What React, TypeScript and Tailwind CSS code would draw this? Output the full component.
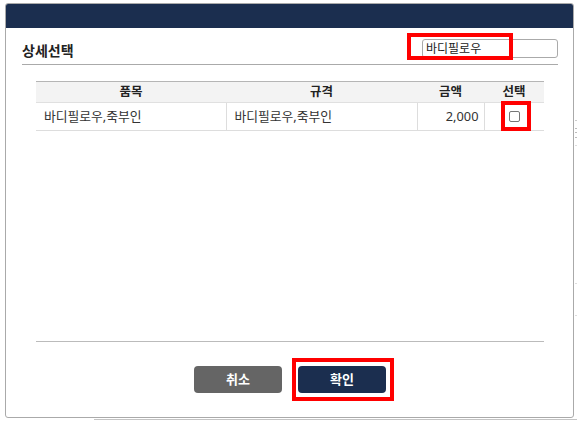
const font = { fontFamily: '"Noto Sans", "Noto Sans CJK KR", sans-serif' };

const rows = [{ name: "바디필로우,죽부인", spec: "바디필로우,죽부인", price: "2,000" }];

export default function App() {
	return (
		<div className="relative h-[421px] w-[577px] overflow-hidden bg-white text-[#222]" style={font}>
			{/* page behind the modal */}
			<div className="absolute inset-0 flex flex-col">
				<div className="ml-[575px] flex flex-col pt-[120px]">
					<div className="h-px bg-[#ccc]" />
					<div className="mt-[7px] h-px bg-[#bbb]" />
					<div className="mt-[3px] h-px bg-[#bbb]" />
					<div className="mt-[4px] h-px bg-[#bbb]" />
					<div className="mt-[7px] h-px bg-[#ddd]" />
					<div className="mt-[137px] h-px bg-[#ddd]" />
					<div className="mt-[31px] h-px bg-[#ddd]" />
				</div>
				<div className="mt-auto mb-[1px] ml-[94px] h-px bg-[#c4c4c4]" />
			</div>

			{/* modal */}
			<div className="absolute top-[3px] left-[5px] flex h-[415px] w-[569px] flex-col overflow-hidden rounded-[3px] border border-[#aaa] bg-white">
				<div className="h-[24px] shrink-0 bg-[#1b2e4f]" />

				<div className="mr-[15px] ml-[16px] flex h-[37px] items-end justify-between border-[#aaa] border-b pb-[6px]">
					<h2 className="mb-[-3px] font-bold text-[14px] leading-[20px]">상세선택</h2>
					<div className="flex h-[19px] w-[136px] items-center rounded-[3px] border border-[#aaa] px-[3px] text-[12px] leading-none">
						바디필로우
					</div>
				</div>

				<div className="mt-[16px] ml-[30px] h-[261px] w-[508px] border-[#bbb] border-b">
					<table className="w-full table-fixed border-collapse text-[12.5px]">
						<colgroup>
							<col className="w-[190px]" />
							<col className="w-[191px]" />
							<col className="w-[67px]" />
							<col className="w-[60px]" />
						</colgroup>
						<thead>
							<tr className="h-[21px] border-[#b5b5b5] border-t bg-[#f3f3f3] font-bold leading-none">
								<th className="border-[#e0e0e0] border-b">품목</th>
								<th className="border-[#e0e0e0] border-b">규격</th>
								<th className="border-[#e0e0e0] border-b">금액</th>
								<th className="border-[#e0e0e0] border-b">선택</th>
							</tr>
						</thead>
						<tbody>
							{rows.map((r) => (
								<tr key={r.name} className="h-[28px] border-[#ddd] border-b text-[#333] leading-none">
									<td className="border-[#ddd] border-r px-[8px] text-[12.8px]">{r.name}</td>
									<td className="border-[#ddd] border-r px-[8px] text-[12.8px]">{r.spec}</td>
									<td className="border-[#ddd] border-r px-[5px] text-right text-[12.8px]">{r.price}</td>
									<td>
										<div className="mx-auto h-[11px] w-[11px] rounded-[2px] border border-[#767676] bg-white" />
									</td>
								</tr>
							))}
						</tbody>
					</table>
				</div>

				<div className="mt-[24px] flex justify-center gap-4 pl-[1px]">
					<button type="button" className="h-[27px] w-[88px] rounded-[4px] bg-[#656565] font-bold text-[13px] text-white">
						취소
					</button>
					<button type="button" className="h-[27px] w-[88px] rounded-[4px] bg-[#1b2e4f] font-bold text-[13px] text-white">
						확인
					</button>
				</div>
			</div>

			{/* red highlight marks */}
			<div className="absolute top-[33px] left-[407px] h-[27px] w-[106px] border-4 border-[#f00]" />
			<div className="absolute top-[101px] left-[501px] h-[30px] w-[30px] border-4 border-[#f00]" />
			<div className="absolute top-[358px] left-[292px] h-[43px] w-[102px] border-4 border-[#f00]" />
		</div>
	);
}
